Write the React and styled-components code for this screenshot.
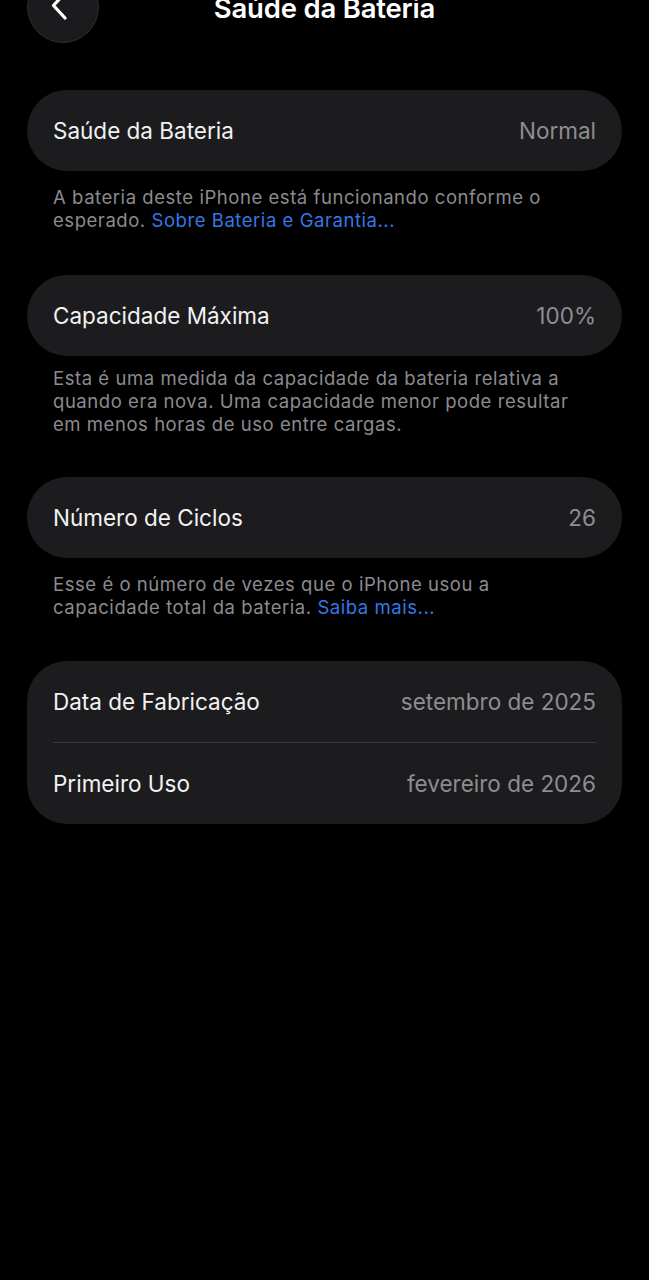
import React from 'react'
import styled, { createGlobalStyle } from 'styled-components'

const Global = createGlobalStyle`
  html, body {
    margin: 0;
    padding: 0;
    background: #000;
  }
  body {
    font-family: Inter, "Noto Sans", sans-serif;
    -webkit-font-smoothing: antialiased;
  }
`

const Page = styled.div`
  min-height: 1280px;
  background: #000;
  overflow: hidden;
`

const Header = styled.header`
  position: relative;
  height: 72px;
  margin-top: -29px;
  display: flex;
  align-items: center;
  justify-content: center;
`

const BackButton = styled.button`
  position: absolute;
  left: 27px;
  top: 0;
  width: 72px;
  height: 72px;
  border-radius: 50%;
  border: 1px solid #2c2c2e;
  background: #1b1b1d;
  display: flex;
  align-items: center;
  justify-content: center;
  padding: 0;
  svg {
    margin-left: -6px;
    margin-top: -2px;
  }
`

const Title = styled.h1`
  margin: 0;
  padding-top: 1px;
  color: #fff;
  font-size: 27.5px;
  font-weight: 600;
  letter-spacing: -0.2px;
`

const Content = styled.main`
  padding: 47px 27px 0;
  display: flex;
  flex-direction: column;
`

const Group = styled.div`
  margin-bottom: ${p => p.$gap || 42}px;
`

const Card = styled.div`
  background: #1c1c1e;
  border-radius: 40px;
  padding: 0 26px;
`

const Row = styled.div`
  height: 81px;
  display: flex;
  align-items: center;
  justify-content: space-between;
  border-top: ${p => (p.$divider ? '1px solid #38383a' : 'none')};
  font-size: 22.5px;
`

const Label = styled.span`
  color: #f2f2f2;
`

const Value = styled.span`
  color: #8d8d92;
`

const Footer = styled.p`
  margin: ${p => p.$top || 15}px 0 0;
  padding: 0 26px;
  color: #8b8b90;
  font-size: 18.5px;
  line-height: 23px;
  letter-spacing: 0.55px;
`

const Link = styled.a`
  color: #3478e6;
  text-decoration: none;
`

export default function App() {
  return (
    <Page>
      <Global />
      <Header>
        <BackButton aria-label="Voltar">
          <svg width="22" height="30" viewBox="0 0 22 30" fill="none">
            <path d="M16 2 L4.5 14.5 L16 27" stroke="#fff" strokeWidth="3.2" strokeLinecap="round" strokeLinejoin="round" />
          </svg>
        </BackButton>
        <Title>Saúde da Bateria</Title>
      </Header>
      <Content>
        <Group $gap={43}>
          <Card>
            <Row>
              <Label>Saúde da Bateria</Label>
              <Value>Normal</Value>
            </Row>
          </Card>
          <Footer>
            A bateria deste iPhone está funcionando conforme o esperado.{' '}
            <Link>Sobre Bateria e Garantia...</Link>
          </Footer>
        </Group>
        <Group $gap={41}>
          <Card>
            <Row>
              <Label>Capacidade Máxima</Label>
              <Value>100%</Value>
            </Row>
          </Card>
          <Footer $top={11}>
            Esta é uma medida da capacidade da bateria relativa a quando era nova. Uma capacidade menor pode resultar em menos horas de uso entre cargas.
          </Footer>
        </Group>
        <Group $gap={42}>
          <Card>
            <Row>
              <Label>Número de Ciclos</Label>
              <Value>26</Value>
            </Row>
          </Card>
          <Footer>
            Esse é o número de vezes que o iPhone usou a capacidade total da bateria.{' '}
            <Link>Saiba mais...</Link>
          </Footer>
        </Group>
        <Group>
          <Card>
            <Row>
              <Label>Data de Fabricação</Label>
              <Value>setembro de 2025</Value>
            </Row>
            <Row $divider>
              <Label>Primeiro Uso</Label>
              <Value>fevereiro de 2026</Value>
            </Row>
          </Card>
        </Group>
      </Content>
    </Page>
  )
}
